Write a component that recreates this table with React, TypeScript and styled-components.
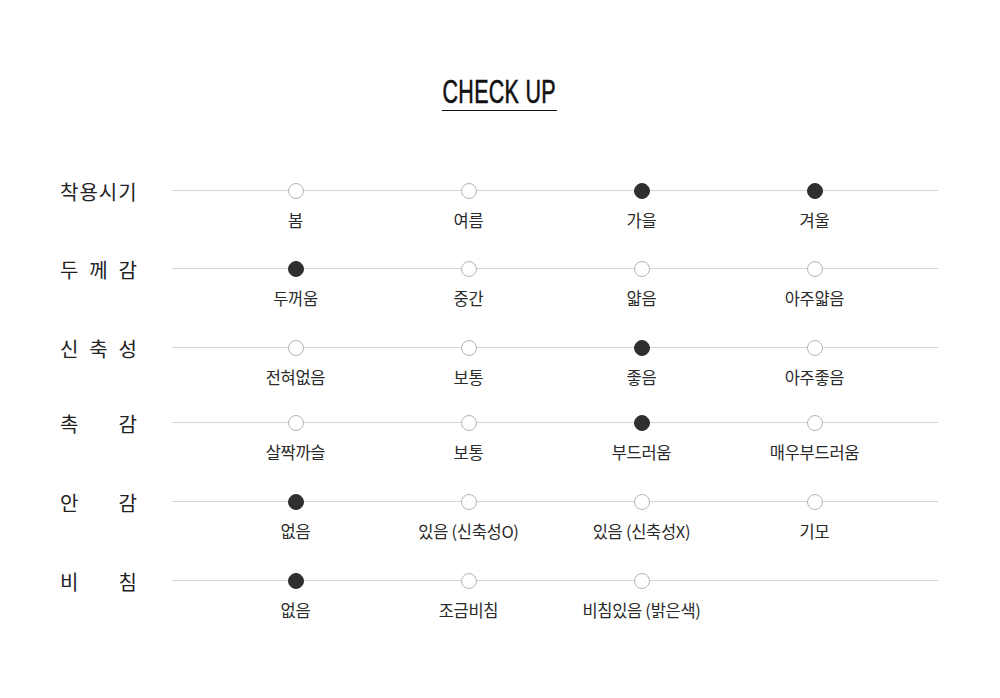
import styled, { createGlobalStyle } from 'styled-components';

const GlobalStyle = createGlobalStyle`
    body {
        margin: 0;
        background: #fff;
        font-family: 'Noto Sans CJK KR', 'Noto Sans', sans-serif;
        color: #333;
    }
`;

interface CheckRow {
    label: string[];
    options: string[];
    checked: number[];
}

const rows: CheckRow[] = [
    { label: ['착용시기'], options: ['봄', '여름', '가을', '겨울'], checked: [2, 3] },
    { label: ['두', '께', '감'], options: ['두꺼움', '중간', '얇음', '아주얇음'], checked: [0] },
    { label: ['신', '축', '성'], options: ['전혀없음', '보통', '좋음', '아주좋음'], checked: [2] },
    { label: ['촉', '감'], options: ['살짝까슬', '보통', '부드러움', '매우부드러움'], checked: [2] },
    { label: ['안', '감'], options: ['없음', '있음 (신축성O)', '있음 (신축성X)', '기모'], checked: [0] },
    { label: ['비', '침'], options: ['없음', '조금비침', '비침있음 (밝은색)'], checked: [0] },
];

const Page = styled.div`
    width: 1000px;
    height: 698px;
    padding: 74px 62px 0 60px;
    box-sizing: border-box;
`;

const TitleWrap = styled.div`
    display: flex;
    justify-content: center;
    margin-bottom: 63px;
`;

const Title = styled.h2`
    margin: 0;
    font-family: 'Liberation Sans', sans-serif;
    font-weight: 400;
    font-size: 33px;
    line-height: 36px;
    letter-spacing: 0.5px;
    color: #111;
    border-bottom: 1.5px solid #111;
    padding: 0 1px;
    transform: scaleX(0.65);
    -webkit-text-stroke: 0.6px #111;
`;

const List = styled.div`
    display: flex;
    flex-direction: column;
`;

const Row = styled.div<{ $gap: number }>`
    display: flex;
    height: ${(p) => p.$gap}px;
`;

const Label = styled.div<{ $single: boolean }>`
    width: 77px;
    height: 34px;
    display: flex;
    justify-content: space-between;
    align-items: center;
    font-size: 20px;
    letter-spacing: ${(p) => (p.$single ? '1px' : '0')};
    white-space: nowrap;
    color: #222;
    flex-shrink: 0;
    margin-right: 35px;
`;

const Track = styled.div`
    position: relative;
    flex: 1;
    display: grid;
    grid-template-columns: repeat(4, 173px);
    padding: 0 37px 0 37px;
    &::before {
        content: '';
        position: absolute;
        left: 0;
        right: 0;
        top: 16px;
        height: 1px;
        background: #d4d4d4;
    }
`;

const Option = styled.div`
    position: relative;
    display: flex;
    flex-direction: column;
    align-items: center;
`;

const Dot = styled.span<{ $on: boolean }>`
    margin-top: 9px;
    width: 16px;
    height: 16px;
    border-radius: 50%;
    box-sizing: border-box;
    background: ${(p) => (p.$on ? '#2f2f2f' : '#fff')};
    border: 1px solid ${(p) => (p.$on ? '#2f2f2f' : '#b5b5b5')};
`;

const OptionText = styled.span`
    margin-top: 10px;
    font-size: 16.5px;
    line-height: 22px;
    letter-spacing: -0.3px;
    color: #2a2a2a;
    white-space: nowrap;
`;

const gaps = [78, 79, 75, 79, 79, 60];

function App() {
    return (
        <>
            <GlobalStyle />
            <Page>
                <TitleWrap>
                    <Title>CHECK UP</Title>
                </TitleWrap>
                <List>
                    {rows.map((row, i) => (
                        <Row key={i} $gap={gaps[i]}>
                            <Label $single={row.label.length === 1}>
                                {row.label.map((ch, j) => (
                                    <span key={j}>{ch}</span>
                                ))}
                            </Label>
                            <Track>
                                {row.options.map((opt, j) => (
                                    <Option key={j}>
                                        <Dot $on={row.checked.includes(j)} />
                                        <OptionText>{opt}</OptionText>
                                    </Option>
                                ))}
                            </Track>
                        </Row>
                    ))}
                </List>
            </Page>
        </>
    );
}

export default App;
